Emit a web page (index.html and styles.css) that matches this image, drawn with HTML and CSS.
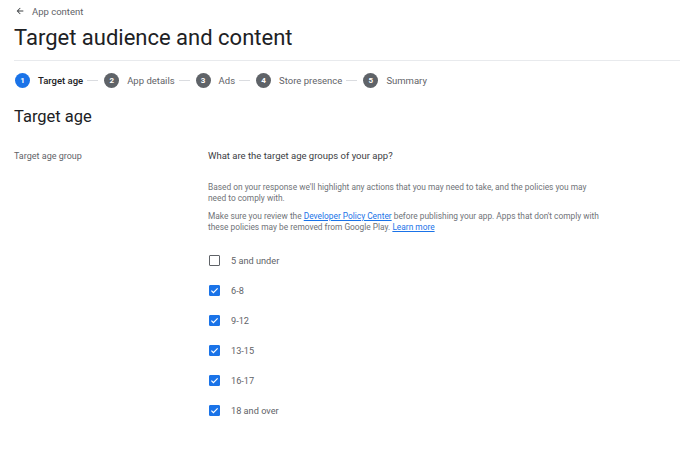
FILE: index.html
```html
<!DOCTYPE html>
<html>
<head>
<meta charset="utf-8">
<link rel="stylesheet" href="styles.css">
</head>
<body>
<div class="page">
  <div class="back">
    <svg class="back-icon" viewBox="0 0 24 24" width="10" height="10"><path d="M20 11H7.83l5.59-5.59L12 4l-8 8 8 8 1.41-1.41L7.83 13H20v-2z" fill="#3c4043"/></svg>
    <span>App content</span>
  </div>
  <h1 class="title">Target audience and content</h1>
  <div class="divider"></div>
  <div class="stepper">
    <div class="step active"><span class="num">1</span><span class="label">Target age</span></div>
    <span class="line"></span>
    <div class="step"><span class="num">2</span><span class="label">App details</span></div>
    <span class="line"></span>
    <div class="step"><span class="num">3</span><span class="label">Ads</span></div>
    <span class="line"></span>
    <div class="step"><span class="num">4</span><span class="label">Store presence</span></div>
    <span class="line"></span>
    <div class="step"><span class="num">5</span><span class="label">Summary</span></div>
  </div>
  <h2 class="section">Target age</h2>
  <div class="form">
    <div class="field-label">Target age group</div>
    <div class="field">
      <div class="question">What are the target age groups of your app?</div>
      <p class="help">Based on your response we'll highlight any actions that you may need to take, and the policies you may need to comply with.</p>
      <p class="help">Make sure you review the <a href="#">Developer Policy Center</a> before publishing your app. Apps that don't comply with these policies may be removed from Google Play. <a href="#">Learn more</a></p>
      <div class="options">
        <label class="opt"><span class="box"></span><span>5 and under</span></label>
        <label class="opt"><span class="box checked"><svg viewBox="0 0 12 12" width="11" height="11"><path d="M2.6 6.2l2.2 2.2 4.6-4.7" fill="none" stroke="#fff" stroke-width="1.3"/></svg></span><span>6-8</span></label>
        <label class="opt"><span class="box checked"><svg viewBox="0 0 12 12" width="11" height="11"><path d="M2.6 6.2l2.2 2.2 4.6-4.7" fill="none" stroke="#fff" stroke-width="1.3"/></svg></span><span>9-12</span></label>
        <label class="opt"><span class="box checked"><svg viewBox="0 0 12 12" width="11" height="11"><path d="M2.6 6.2l2.2 2.2 4.6-4.7" fill="none" stroke="#fff" stroke-width="1.3"/></svg></span><span>13-15</span></label>
        <label class="opt"><span class="box checked"><svg viewBox="0 0 12 12" width="11" height="11"><path d="M2.6 6.2l2.2 2.2 4.6-4.7" fill="none" stroke="#fff" stroke-width="1.3"/></svg></span><span>16-17</span></label>
        <label class="opt"><span class="box checked"><svg viewBox="0 0 12 12" width="11" height="11"><path d="M2.6 6.2l2.2 2.2 4.6-4.7" fill="none" stroke="#fff" stroke-width="1.3"/></svg></span><span>18 and over</span></label>
      </div>
    </div>
  </div>
</div>
</body>
</html>
```

FILE: styles.css
```css
* { box-sizing: border-box; }
body {
  margin: 0;
  background: #fff;
  font-family: Roboto, "Liberation Sans", sans-serif;
  color: #3c4043;
}
.page {
  padding: 5px 0 0 14px;
}
.back {
  display: flex;
  align-items: center;
  gap: 7px;
  font-size: 9.5px;
  color: #5f6368;
  height: 12px;
  padding-left: 1px;
}
.back-icon { display: block; }
.title {
  margin: 8px 0 0;
  font-size: 22px;
  font-weight: 400;
  color: #202124;
  line-height: 26px;
}
.divider {
  margin-top: 9px;
  height: 1px;
  background: #e8eaed;
}
.stepper {
  display: flex;
  align-items: center;
  margin-top: 11px;
  height: 16px;
  padding-left: 1px;
}
.step {
  display: flex;
  align-items: center;
  gap: 8px;
  font-size: 9.5px;
  color: #5f6368;
}
.num {
  width: 15px;
  height: 15px;
  border-radius: 50%;
  background: #5f6368;
  color: #fff;
  font-size: 8px;
  font-weight: 700;
  display: flex;
  align-items: center;
  justify-content: center;
}
.step.active .num { background: #1a73e8; }
.step.active .label { color: #202124; font-weight: 500; }
.line {
  width: 11px;
  height: 1px;
  background: #dadce0;
  margin: 0 6px 0 4px;
}
.section {
  margin: 19px 0 0;
  font-size: 16.5px;
  font-weight: 400;
  color: #202124;
  line-height: 20px;
}
.form {
  display: grid;
  grid-template-columns: 194px 395px;
  margin-top: 22px;
}
.field-label {
  font-size: 9px;
  color: #5f6368;
  line-height: 14px;
}
.question {
  font-size: 9.5px;
  color: #3c4043;
  line-height: 14px;
}
.help {
  margin: 0 0 7px;
  font-size: 8.35px;
  line-height: 11px;
  color: #6f7378;
}
.question + .help { margin-top: 19px; }
.help a { color: #1a73e8; }
.options {
  display: flex;
  flex-direction: column;
  gap: 19px;
  margin-top: 22px;
  padding-left: 1px;
}
.opt {
  display: flex;
  align-items: center;
  gap: 11px;
  font-size: 9.2px;
  color: #5f6368;
  height: 11px;
}
.box {
  width: 11px;
  height: 11px;
  border: 1.5px solid #5f6368;
  border-radius: 1px;
  display: flex;
  align-items: center;
  justify-content: center;
}
.box.checked {
  background: #1a73e8;
  border-color: #1a73e8;
}
.box svg { flex: none; }
```
